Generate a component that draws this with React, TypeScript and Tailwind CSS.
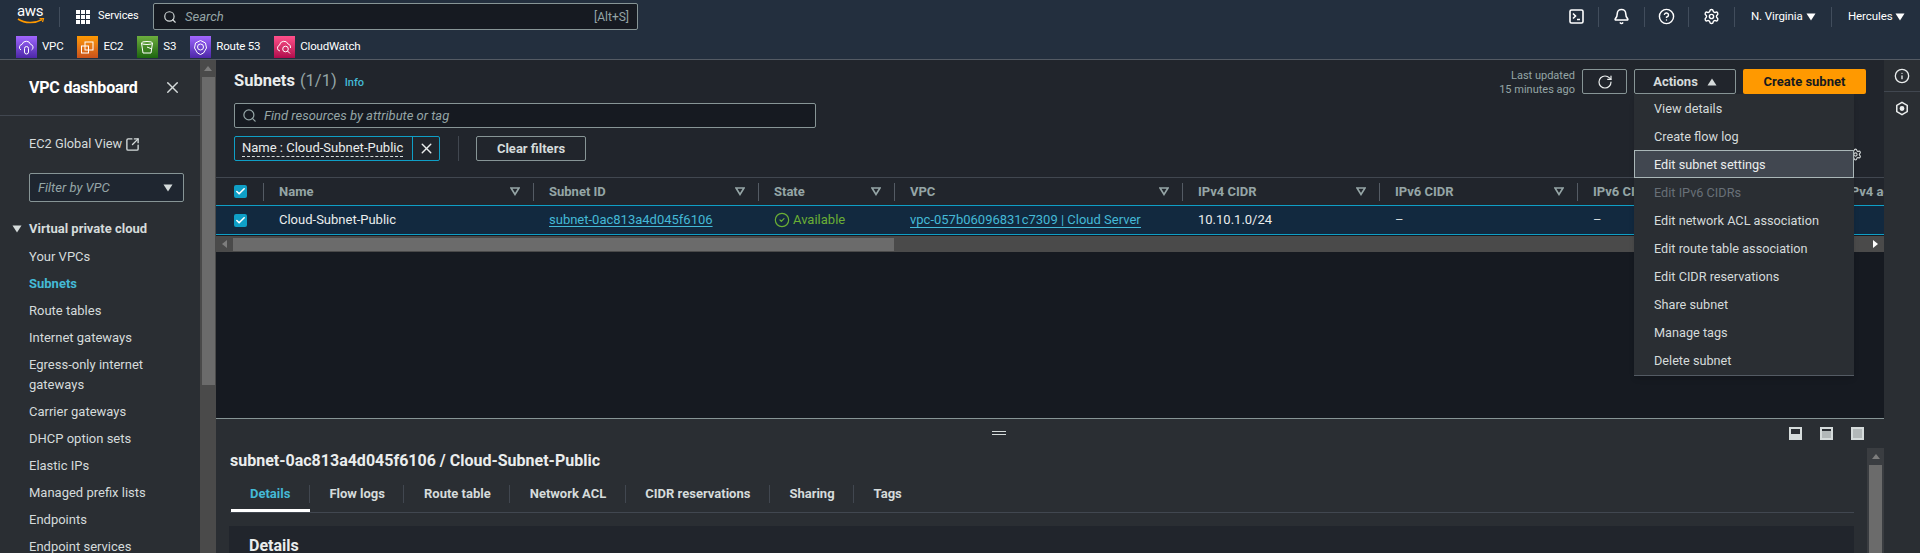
import { ReactNode } from 'react';
import { RotateCw, Search, X, SquareArrowOutUpRight, Bell, CircleHelp, Settings, Info, Check, CircleCheck } from 'lucide-react';

const navItems = ['Your VPCs', 'Subnets', 'Route tables', 'Internet gateways', 'Egress-only internet gateways', 'Carrier gateways', 'DHCP option sets', 'Elastic IPs', 'Managed prefix lists', 'Endpoints', 'Endpoint services'];
const menuItems = ['View details', 'Create flow log', 'Edit subnet settings', 'Edit IPv6 CIDRs', 'Edit network ACL association', 'Edit route table association', 'Edit CIDR reservations', 'Share subnet', 'Manage tags', 'Delete subnet'];
const tabs = ['Details', 'Flow logs', 'Route table', 'Network ACL', 'CIDR reservations', 'Sharing', 'Tags'];

function Caret({ className = '' }: { className?: string }) {
  return (
    <svg width="10" height="8" viewBox="0 0 10 8" className={className}>
      <path d="M0.5 0.5h9L5 7.5z" fill="currentColor" />
    </svg>
  );
}

function FilterIcon() {
  return (
    <svg width="10" height="9" viewBox="0 0 10 9" className="text-[#95a5a6] shrink-0">
      <path d="M1 1h8L5 7.5z" fill="none" stroke="currentColor" strokeWidth="1.6" />
    </svg>
  );
}

function CheckBox() {
  return (
    <div className="w-[13px] h-[13px] rounded-[2px] bg-[#0f9fc6] flex items-center justify-center">
      <Check size={11} strokeWidth={3.5} className="text-white" />
    </div>
  );
}

function Fav({ label, bg, children }: { label: string; bg: string; children: ReactNode }) {
  return (
    <div className="flex items-center gap-[5px]">
      <div className={`w-[21px] h-[22px] flex items-center justify-center ${bg}`}>
        <svg width="17" height="17" viewBox="0 0 17 17" fill="none" stroke="white" strokeWidth="1">
          {children}
        </svg>
      </div>
      <span className="text-[11.5px] text-white tracking-[-0.2px]">{label}</span>
    </div>
  );
}

function TopSep() {
  return <div className="w-px h-[20px] bg-[#414d5c]" />;
}

function Col({ name, last }: { name: string; last?: boolean }) {
  return (
    <div className="h-full flex items-center">
      <div className="flex-1 min-w-0 pl-[15px] flex items-center justify-between pr-[13px]">
        <span className="font-bold text-[#95a5a6] whitespace-nowrap">{name}</span>
        {!last && <FilterIcon />}
      </div>
      <div className="w-px h-[18px] bg-[#545b64]" />
    </div>
  );
}

export default function App() {
  return (
    <div className="h-[553px] w-[1920px] overflow-hidden flex flex-col bg-[#21252c] text-[13px] text-[#d5dbdb] font-['Roboto','Liberation_Sans',sans-serif]">
      {/* Top bar */}
      <header className="h-[60px] shrink-0 bg-[#232f3e] border-b border-[#545b64] flex flex-col">
        <div className="h-[33px] flex items-center text-white">
          <div className="w-[59px] pl-[17px] flex flex-col items-start">
            <span className="text-[15px] leading-[13px] mt-[-3px] tracking-[-0.3px]">aws</span>
            <svg width="28" height="7" viewBox="0 0 28 7" fill="none">
              <path d="M1 1c7 4.6 17 4.6 24 0.6" stroke="#ff9900" strokeWidth="1.6" />
              <path d="M22.5 0.6h4l-1 3.4" stroke="#ff9900" strokeWidth="1.2" />
            </svg>
          </div>
          <TopSep />
          <div className="ml-[16px] grid grid-cols-3 gap-[1px]">
            {Array.from({ length: 9 }).map((_, i) => (
              <div key={i} className="w-[4px] h-[4px] bg-white" />
            ))}
          </div>
          <span className="ml-[8px] text-[11px] tracking-[-0.1px] w-[40px] whitespace-nowrap">Services</span>
          <div className="ml-[15px] w-[485px] h-[27px] rounded-[2px] border border-[#879596] bg-[#161a21] flex items-center pl-[9px] pr-[8px]">
            <Search size={14} strokeWidth={2} className="text-[#d5dbdb]" />
            <span className="ml-[8px] italic text-[#95a5a6] text-[13px]">Search</span>
            <span className="ml-auto text-[12px] text-[#95a5a6]">[Alt+S]</span>
          </div>
          <div className="ml-auto flex items-center">
            <svg width="15" height="15" viewBox="0 0 15 15" fill="none" stroke="white" strokeWidth="1.6">
              <rect x="1" y="1" width="13" height="13" rx="1.5" />
              <path d="M4 4.5l2.5 2.5L4 9.5M8 10.5h3" />
            </svg>
            <div className="ml-[14px]"><TopSep /></div>
            <Bell size={17} strokeWidth={2.2} className="ml-[14px] text-white" />
            <div className="ml-[14px]"><TopSep /></div>
            <CircleHelp size={17} strokeWidth={2} className="ml-[13px] text-white" />
            <div className="ml-[13px]"><TopSep /></div>
            <Settings size={17} strokeWidth={2} className="ml-[14px] text-white" />
            <div className="ml-[14px]"><TopSep /></div>
            <span className="ml-[16px] text-[11.5px] w-[50px] whitespace-nowrap tracking-[-0.1px]">N. Virginia</span>
            <Caret className="ml-[5px] text-white" />
            <div className="ml-[15px]"><TopSep /></div>
            <span className="ml-[16px] text-[11.5px] w-[42px] whitespace-nowrap tracking-[-0.1px]">Hercules</span>
            <Caret className="ml-[5px] mr-[15px] text-white" />
          </div>
        </div>
        <div className="flex-1 pl-[16px] flex items-start gap-[14px] mt-[3px]">
          <Fav label="VPC" bg="bg-linear-to-t from-[#4d27a8] to-[#a166ff]">
            <path d="M3 11a3 3 0 0 1 1-5.6 4.5 4.5 0 0 1 8.6 0A3 3 0 0 1 13.5 11" />
            <rect x="6.5" y="7.5" width="4" height="7.5" rx="2" />
          </Fav>
          <Fav label="EC2" bg="bg-linear-to-t from-[#c8511b] to-[#ff9900]">
            <rect x="6" y="3" width="8" height="8" />
            <rect x="2.5" y="7" width="7" height="7" />
          </Fav>
          <Fav label="S3" bg="bg-linear-to-t from-[#1b660f] to-[#6cae3e]">
            <ellipse cx="8" cy="4" rx="5.5" ry="1.5" />
            <path d="M2.5 4l1.5 10h8l1.5-10M8 8l5 2" />
          </Fav>
          <Fav label="Route 53" bg="bg-linear-to-t from-[#4d27a8] to-[#a166ff]">
            <path d="M8.5 1.5l5 2.5 1 5-3 5-3 1.5-3-1.5-3-5 1-5z" />
            <circle cx="8.5" cy="8" r="3" />
          </Fav>
          <Fav label="CloudWatch" bg="bg-linear-to-t from-[#b0084d] to-[#ff4f8b]">
            <path d="M4 12a3 3 0 0 1-.5-5.8 4.5 4.5 0 0 1 8.6-1.2 3.4 3.4 0 0 1 2.4 4" />
            <circle cx="9.5" cy="10" r="2.8" />
            <path d="M11.5 12l2.5 2.5" />
          </Fav>
        </div>
      </header>

      <div className="flex-1 min-h-0 flex">
        {/* Side navigation */}
        <aside className="w-[216px] shrink-0 flex bg-[#2a2e33]">
          <nav className="w-[200px] shrink-0 overflow-hidden">
            <div className="h-[56px] pl-[29px] pr-[18px] border-b border-[#414750] flex items-center justify-between">
              <span className="text-[16px] font-bold text-white tracking-[-0.2px]">VPC dashboard</span>
              <X size={19} strokeWidth={1.8} className="text-[#d5dbdb]" />
            </div>
            <div className="h-[56px] pl-[29px] flex items-center gap-[3px]">
              <span className="text-[12.8px]">EC2 Global View</span>
              <SquareArrowOutUpRight size={15} strokeWidth={2.2} />
            </div>
            <div className="ml-[29px] mt-[1px] w-[155px] h-[29px] border border-[#879596] rounded-[2px] bg-[#1f2630] flex items-center justify-between pl-[8px] pr-[10px]">
              <span className="italic text-[#95a5a6]">Filter by VPC</span>
              <Caret className="text-[#d5dbdb]" />
            </div>
            <div className="mt-[13px] mb-px h-[27px] pl-[12px] flex items-center gap-[7px]">
              <Caret className="text-[#d5dbdb]" />
              <span className="font-bold">Virtual private cloud</span>
            </div>
            {navItems.map((item) => (
              <div
                key={item}
                className={`pl-[29px] pr-[16px] py-[3.5px] leading-[20px] ${item === 'Subnets' ? 'text-[#44b9d6] font-bold' : ''}`}
              >
                {item}
              </div>
            ))}
          </nav>
          <div className="w-[16px] bg-[#4a4a4a] flex flex-col items-center">
            <svg width="8" height="5" viewBox="0 0 8 5" className="mt-[6px] text-[#7d7d7d]"><path d="M4 0l4 5H0z" fill="currentColor" /></svg>
            <div className="mt-[6px] w-[13px] h-[308px] bg-[#6b6b6b]" />
          </div>
        </aside>

        {/* Main column */}
        <main className="flex-1 min-w-0 flex flex-col overflow-hidden">
          <section className="h-[358px] shrink-0 flex flex-col bg-[#161a21]">
            <div className="bg-[#21252c] h-[117px] shrink-0">
              <div className="h-[43px] pl-[18px] pr-[18px] pt-[9px] flex items-start justify-between">
                <div className="flex items-baseline">
                  <span className="text-[16.5px] font-bold text-[#eaeded]">Subnets</span>
                  <span className="text-[16.5px] text-[#95a5a6] ml-[5px]">(1/1)</span>
                  <span className="text-[11px] text-[#44b9d6] ml-[8px] font-medium">Info</span>
                </div>
                <div className="flex items-start">
                  <div className="text-right text-[11px] leading-[14px] text-[#95a5a6] mr-[7px]">
                    <div>Last updated</div>
                    <div>15 minutes ago</div>
                  </div>
                  <button className="w-[45px] h-[25px] border border-[#879596] rounded-[2px] flex items-center justify-center">
                    <RotateCw size={16} strokeWidth={1.8} className="text-[#eaeded]" />
                  </button>
                  <div className="relative ml-[7px]">
                    <button className="w-[102px] h-[25px] border border-[#879596] rounded-[2px] flex items-center justify-center gap-[9px] font-bold text-[#d5dbdb]">
                      Actions
                      <Caret className="rotate-180 text-[#d5dbdb]" />
                    </button>
                    <div className="absolute z-10 left-0 top-[25px] w-[220px] bg-[#2a2e33] border-b border-[#545b64] shadow-md text-[12.7px]">
                      {menuItems.map((item) => (
                        <div
                          key={item}
                          className={`h-[28.1px] flex items-center whitespace-nowrap ${
                            item === 'Edit subnet settings'
                              ? 'pl-[19px] bg-[#414750] border border-[#aab7b8] text-[#eaeded]'
                              : item === 'Edit IPv6 CIDRs'
                                ? 'pl-[20px] text-[#687078]'
                                : 'pl-[20px]'
                          }`}
                        >
                          {item}
                        </div>
                      ))}
                    </div>
                  </div>
                  <button className="ml-[7px] w-[123px] h-[25px] rounded-[2px] bg-[#ff9900] text-[#16191f] font-bold">Create subnet</button>
                </div>
              </div>
              <div className="ml-[18px] w-[582px] h-[25px] border border-[#879596] rounded-[2px] bg-[#161a21] flex items-center pl-[7px]">
                <Search size={15} strokeWidth={2} className="text-[#95a5a6]" />
                <span className="ml-[7px] italic text-[#95a5a6]">Find resources by attribute or tag</span>
              </div>
              <div className="mt-[8px] h-[25px] pl-[18px] pr-[22px] flex items-center">
                <div className="h-[25px] w-[206px] border border-[#0f9fc6] rounded-[2px] flex items-center">
                  <div className="flex-1 h-full flex items-center pl-[7px]">
                    <span className="border-b border-dashed border-[#d5dbdb] leading-[16px] whitespace-nowrap text-[#eaeded]">Name : Cloud-Subnet-Public</span>
                  </div>
                  <div className="w-[27px] h-full border-l border-[#0f9fc6] flex items-center justify-center">
                    <X size={17} strokeWidth={2} className="text-[#eaeded]" />
                  </div>
                </div>
                <div className="ml-[18px] w-px h-[25px] bg-[#414750]" />
                <button className="ml-[17px] w-[110px] h-[25px] border border-[#879596] rounded-[2px] font-bold text-[#d5dbdb]">Clear filters</button>
                <Settings size={13} strokeWidth={2} className="ml-auto mt-[11px] text-[#d5dbdb]" />
              </div>
            </div>

            {/* Table */}
            <div className="h-[28px] shrink-0 border-t border-[#414750] bg-[#21252c] grid grid-cols-[48px_270px_225px_136px_288px_197px_198px_254px_200px] w-[1816px]">
              <div className="h-full flex items-center justify-between pl-[18px]">
                <CheckBox />
                <div className="w-px h-[18px] bg-[#545b64]" />
              </div>
              <Col name="Name" />
              <Col name="Subnet ID" />
              <Col name="State" />
              <Col name="VPC" />
              <Col name="IPv4 CIDR" />
              <Col name="IPv6 CIDR" />
              <Col name="IPv6 CIDR" />
              <Col name="IPv4 address" last />
            </div>
            <div className="h-[30px] shrink-0 border-y border-[#0f9fc6] bg-[#12293f]">
              <div className="h-full grid grid-cols-[48px_270px_225px_136px_288px_197px_198px_254px_200px] w-[1816px] items-center">
                <div className="pl-[18px]"><CheckBox /></div>
                <div className="pl-[15px] text-[#eaeded]">Cloud-Subnet-Public</div>
                <div className="pl-[15px] text-[#44b9d6] underline underline-offset-2">subnet-0ac813a4d045f6106</div>
                <div className="pl-[15px] text-[#6aaf35] flex items-center gap-[3px]">
                  <CircleCheck size={16} strokeWidth={1.8} />
                  Available
                </div>
                <div className="pl-[15px] text-[#44b9d6] whitespace-nowrap">
                  <span className="border-b border-[#44b9d6]">vpc-057b06096831c7309 | Cloud Server</span>
                </div>
                <div className="pl-[15px] text-[#eaeded]">10.10.1.0/24</div>
                <div className="pl-[15px]">–</div>
                <div className="pl-[15px]">–</div>
                <div />
              </div>
            </div>
            <div className="mt-px h-[16px] shrink-0 bg-[#4a4a4a] flex items-center">
              <div className="w-[17px] flex justify-center">
                <svg width="5" height="8" viewBox="0 0 5 8" className="text-[#7d7d7d]"><path d="M0 4l5-4v8z" fill="currentColor" /></svg>
              </div>
              <div className="w-[661px] h-[13px] bg-[#6b6b6b]" />
              <div className="ml-auto w-[17px] flex justify-center">
                <svg width="5" height="8" viewBox="0 0 5 8" className="text-white"><path d="M5 4L0 0v8z" fill="currentColor" /></svg>
              </div>
            </div>
          </section>

          {/* Split panel */}
          <section className="relative flex-1 min-h-0 border-t border-[#879596] bg-[#2a2e33] flex flex-col">
            <div className="absolute left-[776px] top-[12px] w-[14px] h-[4px] border-y border-[#d5dbdb]" />
            <div className="h-[29px] shrink-0 flex items-center justify-end pr-[20px] gap-[18px]">
              {['h-[4px]', 'h-[7px]', 'h-[9px]'].map((h) => (
                <div key={h} className="w-[13px] h-[13px] border-2 border-[#d5dbdb] flex items-end">
                  <div className={`w-full ${h} bg-[#d5dbdb] ${h === 'h-[4px]' ? '' : 'opacity-80'}`} />
                </div>
              ))}
            </div>
            <div className="flex-1 min-h-0 flex">
              <div className="flex-1 min-w-0 pl-[14px] pr-[13px]">
                <div className="h-[26px] flex items-center text-[16px] font-bold text-[#eaeded]">
                  subnet-0ac813a4d045f6106 / Cloud-Subnet-Public
                </div>
                <div className="h-[39px] border-b border-[#414750] pl-[0.5px] flex">
                  {tabs.map((t) => (
                    <div key={t} className={`relative h-full flex items-center ${t === 'Tags' ? '' : 'after:absolute after:right-0 after:top-[11px] after:h-[18px] after:w-px after:bg-[#414750]'}`}>
                      <div className={`h-full flex items-center px-[19.5px] pt-[4px] font-bold border-b-[3px] ${t === 'Details' ? 'text-[#44b9d6] border-white' : 'text-[#d5dbdb] border-transparent'}`}>
                        {t}
                      </div>
                    </div>
                  ))}
                </div>
                <div className="mt-[13px] -ml-px h-[60px] bg-[#21252c] pl-[20px] pt-[8px] text-[16px] font-bold text-[#eaeded]">Details</div>
              </div>
              <div className="w-[17px] shrink-0 bg-[#3a3d41] flex flex-col items-center">
                <svg width="8" height="5" viewBox="0 0 8 5" className="mt-[6px] text-[#7d7d7d]"><path d="M4 0l4 5H0z" fill="currentColor" /></svg>
                <div className="mt-[6px] flex-1 w-[13px] bg-[#6b6b6b]" />
              </div>
            </div>
          </section>
        </main>

        {/* Right rail */}
        <aside className="w-[36px] shrink-0 bg-[#2a2e33] flex flex-col items-center">
          <div className="w-full h-[32px] border-b border-[#414750] flex items-center justify-center">
            <Info size={16} strokeWidth={2} className="text-[#eaeded]" />
          </div>
          <svg width="14" height="15" viewBox="0 0 15 15" fill="none" stroke="#eaeded" strokeWidth="1.6" className="mt-[9px]">
            <path d="M7.5 1l5.6 3.2v6.6L7.5 14l-5.6-3.2V4.2z" />
            <circle cx="7.5" cy="7.5" r="1.8" fill="#eaeded" />
          </svg>
        </aside>
      </div>
    </div>
  );
}
